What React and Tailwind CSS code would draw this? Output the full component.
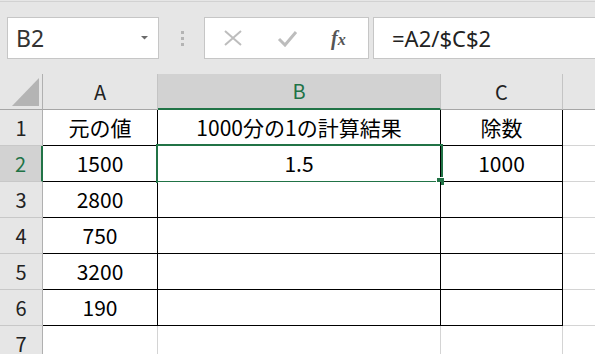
import React from "react";

const G = "#217346";
const jp = { fontFamily: '"Noto Sans CJK JP", "Noto Sans", sans-serif' };
const ui = { fontFamily: '"Noto Sans", "Liberation Sans", sans-serif' };

const rows = [
  ["元の値", "1000分の1の計算結果", "除数"],
  ["1500", "1.5", "1000"],
  ["2800", "", ""],
  ["750", "", ""],
  ["3200", "", ""],
  ["190", "", ""],
];

function ColHead({ label, w, selected, last }) {
  return (
    <div
      className={`h-full flex items-center justify-center text-[20px] ${
        last ? "flex-1" : "border-r border-[#c4c4c4]"
      } ${selected ? "bg-[#d2d2d2] text-[#217346] border-b-2 border-b-[#217346]" : "border-b border-b-[#a6a6a6] text-[#222]"}`}
      style={{ width: w }}
    >
      {label}
    </div>
  );
}

export default function App() {
  return (
    <div className="w-[595px] h-[354px] overflow-hidden bg-[#e6e6e6]" style={jp}>
      {/* toolbar */}
      <div className="h-[74px] pt-px">
        <div className="h-px bg-[#d2d2d2]" />
        <div className="flex items-start mt-[15px]">
          <div
            className="ml-[7px] w-[152px] h-[42px] border border-[#c6c6c6] bg-white flex items-center pl-[8px] pr-[10px] text-[23px] text-[#333]"
            style={ui}
          >
            <span className="flex-1 leading-none">B2</span>
            <svg width="7" height="4" viewBox="0 0 7 4">
              <polygon points="0,0 7,0 3.5,3.5" fill="#6b6b6b" />
            </svg>
          </div>
          <div className="w-[45px] h-[42px] flex flex-col items-center justify-center gap-[3px] pl-[1px]">
            <div className="w-[3px] h-[3px] bg-[#b4b4b4]" />
            <div className="w-[3px] h-[3px] bg-[#b4b4b4]" />
            <div className="w-[3px] h-[3px] bg-[#b4b4b4]" />
          </div>
          <div className="w-[165px] h-[42px] border border-[#c6c6c6] bg-white flex items-center">
            <svg width="20" height="16" viewBox="0 0 20 16" className="ml-[18px]">
              <path d="M2 1 L18 15 M18 1 L2 15" stroke="#bdbdbd" strokeWidth="2" />
            </svg>
            <svg width="21" height="17" viewBox="0 0 21 17" className="ml-[34px]">
              <path d="M2 9 L8 15 L19 2" stroke="#bdbdbd" strokeWidth="3" fill="none" />
            </svg>
            <span
              className="ml-[33px] text-[20px] italic font-bold text-[#555]"
              style={{ fontFamily: '"Liberation Serif", "DejaVu Serif", serif' }}
            >
              f<span className="text-[16px]">x</span>
            </span>
          </div>
          <div
            className="ml-[4px] flex-1 h-[42px] border border-[#c6c6c6] border-r-0 bg-white flex items-center pl-[18px] text-[22px] text-[#222]"
            style={ui}
          >
            =A2/$C$2
          </div>
        </div>
      </div>

      {/* column headers */}
      <div className="flex h-[36px]">
        <div className="w-[43px] h-full border-r border-[#b0b0b0] border-b border-b-[#a6a6a6] relative">
          <svg width="27" height="28" viewBox="0 0 27 28" className="absolute left-[12px] top-[4px]">
            <polygon points="27,0 27,28 0,28" fill="#b4b4b4" />
          </svg>
        </div>
        <ColHead label="A" w={115} />
        <ColHead label="B" w={283} selected />
        <ColHead label="C" w={122} />
        <ColHead label="" last />
      </div>

      {/* data rows */}
      {rows.map((r, i) => (
        <div key={i} className="flex h-[36px]">
          <div
            className={`w-[43px] h-full flex items-center justify-center text-[20px] border-b border-b-[#c8c8c8] ${
              i === 1
                ? "bg-[#d2d2d2] text-[#217346] border-r-2 border-r-[#217346]"
                : "border-r border-r-[#b0b0b0] text-[#222]"
            }`}
          >
            {i + 1}
          </div>
          <div className="w-[115px] h-full bg-white border-r border-b border-black flex items-center justify-center text-[21px] text-black">
            {r[0]}
          </div>
          <div className="w-[283px] h-full bg-white border-r border-b border-black flex items-center justify-center text-[21px] text-black relative">
            {r[1]}
            {i === 1 && (
              <>
                <div className="absolute -left-[2px] -top-[2px] w-[287px] h-[39px] border-2 border-[#217346]" />
                <div className="absolute left-[278px] top-[31px] w-[8px] h-[8px] bg-[#217346] border border-white border-r-0 border-b-0" />
              </>
            )}
          </div>
          <div className="w-[122px] h-full bg-white border-r border-b border-black flex items-center justify-center text-[21px] text-black">
            {r[2]}
          </div>
          <div className="flex-1 h-full bg-white border-b border-[#d4d4d4]" />
        </div>
      ))}

      {/* row 7 */}
      <div className="flex h-[36px]">
        <div className="w-[43px] h-full flex items-center justify-center text-[20px] border-r border-[#b0b0b0] text-[#222]">
          7
        </div>
        <div className="w-[115px] h-full bg-white border-r border-[#d4d4d4]" />
        <div className="w-[283px] h-full bg-white border-r border-[#d4d4d4]" />
        <div className="w-[122px] h-full bg-white border-r border-[#d4d4d4]" />
        <div className="flex-1 h-full bg-white" />
      </div>
    </div>
  );
}
